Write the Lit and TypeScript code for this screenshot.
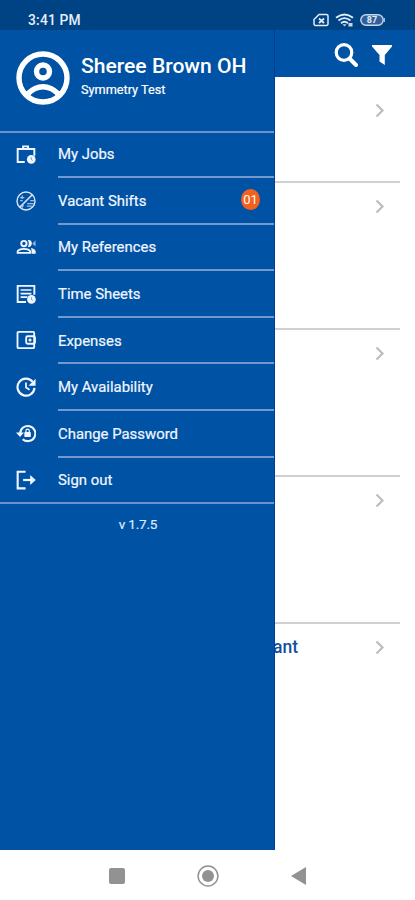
import { LitElement, html, svg, css, TemplateResult } from "lit";
import { customElement, property } from "lit/decorators.js";

// Menu glyphs on a 24-unit grid.
const glyphs: Record<string, TemplateResult> = {
  jobs: svg`<path d="M8.500 6V2.800h6V6M10.500 21.500H2V6h20v8" fill="none" stroke="currentColor" stroke-width="2.300"/>
    <circle cx="18.300" cy="18.500" r="5.200" fill="currentColor"/>
    <path d="M18.300 15.800v2.900l1.800 1" fill="none" stroke="#5f8fca" stroke-width="1"/>`,
  vacant: svg`<g fill="none" stroke="currentColor" stroke-width="1.700" opacity=".9"><circle cx="12" cy="12" r="10.800"/>
    <path d="M4.500 19.500L19.500 4.500" stroke-width="2"/>
    <path d="M5 8h5M5 11.500h3M7.500 5.500v4M13 18h6M13.500 15h7.500M17 11.500h4.500M9 17l-2 3" stroke-width="1.500" opacity=".75"/></g>`,
  references: svg`<g fill="none" stroke="currentColor" stroke-width="2.300"><circle cx="9.500" cy="7.800" r="3.200"/>
    <path d="M2 19v-1.500c0-2 4-3.300 7.500-3.300s7.500 1.300 7.500 3.300V19z"/></g>
    <path d="M14 3.800c3.500-.6 5 1.500 5 4s-2 4.700-5 4c1.800-2 1.800-6 0-8zM18 13.200c3 .5 5.600 2 5.600 4.300v2.700h-4.900v-2.700c0-1.600-.2-2.900-.7-4.300z" fill="currentColor"/>
    <path d="M19.500 8l4-4v7.500z" fill="currentColor" opacity=".6"/>`,
  sheets: svg`<path d="M12 21.500H2V2.200h20V13" fill="none" stroke="currentColor" stroke-width="2.300"/>
    <path d="M5.500 7.200h13M5.500 11.500h13M5.500 15.800h8" fill="none" stroke="currentColor" stroke-width="2"/>
    <circle cx="18.500" cy="18.500" r="5.200" fill="currentColor"/>
    <path d="M18.500 15.800v2.900l1.800 1" fill="none" stroke="#5f8fca" stroke-width="1"/>`,
  expenses: svg`<g fill="none" stroke="currentColor" stroke-width="2.200"><rect x="1.800" y="2.200" width="20" height="19.600" rx="1.200"/>
    <rect x="12.200" y="7.500" width="10.600" height="9" rx="1.800"/></g><circle cx="16.800" cy="12" r="1.900" fill="currentColor"/>`,
  availability: svg`<path d="M20 5.800A10.200 10.200 0 1 0 22.200 13" fill="none" stroke="currentColor" stroke-width="2.600"/>
    <path d="M23.500 2v8.500H15z" fill="currentColor"/><path d="M12 6.500v6l4.300 2.700" fill="none" stroke="currentColor" stroke-width="2.100"/>`,
  password: svg`<path d="M5 12.500A9.100 9.100 0 1 1 8 19.400" fill="none" stroke="currentColor" stroke-width="2.500"/>
    <path d="M0 11.300h9.600L4.800 16.800z" fill="currentColor"/><rect x="10" y="10.800" width="7.800" height="6" rx="1" fill="currentColor"/>
    <path d="M11.900 11V9.200a2 2 0 0 1 4 0V11" fill="none" stroke="currentColor" stroke-width="1.500"/>`,
  signout: svg`<path d="M11.500 2H2v20h9.500" fill="none" stroke="currentColor" stroke-width="2.500"/>
    <path d="M8.500 12h12" stroke="currentColor" stroke-width="2.600"/><path d="M17 6l6.700 6-6.700 6z" fill="currentColor"/>`,
};

@customElement("menu-item")
class MenuItem extends LitElement {
  @property() icon = "";
  @property() label = "";
  @property() badge = "";

  static styles = css`
    :host { display: flex; height: 46.580px; padding-left: 16px; color: #f2f7ff; }
    .icon { width: 20px; height: 20px; margin-top: 12.500px; flex: none; }
    .body {
      flex: 1; margin-left: 22px; display: flex; align-items: center; justify-content: space-between;
      padding-right: 15px; box-sizing: border-box; border-bottom: 2px solid #7499cf;
    }
    :host([last]) .body { border-bottom-color: transparent; }
    .label { font-size: 14.900px; line-height: 20px; -webkit-text-stroke: 0.200px currentColor; margin-top: 1px; }
    .badge {
      width: 19px; height: 21px; border-radius: 50%; background: #f4611d; font-size: 13px;
      line-height: 21px; text-align: center; margin-top: -2px; margin-right: -1px; color: #fff;
    }
  `;

  render() {
    return html`<svg class="icon" viewBox="0 0 24 24">${glyphs[this.icon]}</svg>
      <div class="body"><span class="label">${this.label}</span>
        ${this.badge ? html`<span class="badge">${this.badge}</span>` : null}</div>`;
  }
}

@customElement("app-root")
class AppRoot extends LitElement {
  static styles = css`
    :host {
      display: flex; flex-direction: column; position: relative; width: 415px; height: 900px;
      overflow: hidden; background: #fff; font-family: Roboto, sans-serif; color: #fff;
    }
    .status {
      height: 30px; flex: none; background: #004384; display: flex; align-items: center;
      padding: 9px 30px 0 28px; box-sizing: border-box; gap: 6px;
    }
    .time { font-size: 13.800px; font-weight: 500; flex: 1; line-height: 20px; letter-spacing: 0.200px; color: #e6eefa; }
    .bar {
      height: 47px; flex: none; background: #0052a5; display: flex; align-items: center;
      justify-content: flex-end; gap: 14px; padding: 2px 23px 0 0; box-sizing: border-box;
    }
    .list { flex: 1; display: flex; flex-direction: column; margin: 0 15px 0 273px; }
    .row { height: 147px; box-sizing: border-box; border-bottom: 2px solid #d0d0d2; display: flex; padding: 15px 15px 0 0; justify-content: space-between; }
    .row.first { height: 106px; padding-top: 25px; }
    .row.last { border: none; }
    .title { color: #12509b; font-size: 17.500px; font-weight: 500; line-height: 20px; margin-top: -2px; }
    .chevron { width: 10px; height: 16px; margin-left: auto; }
    .drawer { position: absolute; left: 0; top: 30px; width: 275px; height: 820px; background: #0052a5; box-sizing: border-box; border-right: 1px solid #003e9b; }
    .profile {
      height: 102.500px; box-sizing: border-box; display: flex; border-bottom: 2px solid #6b92cb; padding: 21px 0 0 16px; gap: 11px;
    }
    .avatar { width: 54px; height: 54px; flex: none; }
    .name { font-size: 21.100px; line-height: 26px; font-weight: 500; white-space: nowrap; margin-top: 2px; }
    .org { font-size: 12.700px; line-height: 18px; margin-top: 2px; -webkit-text-stroke: 0.200px currentColor; }
    .menu { border-bottom: 2px solid #6b92cb; height: 372px; box-sizing: border-box; margin-top: -1px; }
    .version { text-align: center; font-size: 13.500px; line-height: 18px; margin-top: 11px; padding-left: 2px; letter-spacing: -0.200px; color: #dceaff; -webkit-text-stroke: 0.200px currentColor; }
    .nav { height: 50px; flex: none; display: flex; align-items: center; justify-content: center; gap: 72px; box-sizing: border-box; padding: 1px 1px 0 0; }
    .battery { font: 700 9px Roboto, sans-serif; }
  `;

  private chevron() {
    return html`<svg class="chevron" viewBox="0 0 10 16"><path d="M1.500 2.500L7.500 8.500L1.500 14.500" fill="none" stroke="#bdbdbd" stroke-width="2.200"/></svg>`;
  }

  render() {
    const items = [
      ["jobs", "My Jobs"], ["vacant", "Vacant Shifts", "01"], ["references", "My References"],
      ["sheets", "Time Sheets"], ["expenses", "Expenses"], ["availability", "My Availability"],
      ["password", "Change Password"], ["signout", "Sign out"],
    ];
    return html`
      <div class="status">
        <span class="time">3:41 PM</span>
        <svg width="16" height="14" viewBox="0 0 16 14"><path d="M6 1.500h7.500a1.500 1.500 0 0 1 1.500 1.500v8a1.500 1.500 0 0 1-1.500 1.500H2.500A1.500 1.500 0 0 1 1 11V6.500z" fill="none" stroke="#e2ebf8" stroke-width="1.500"/><path d="M6 5.500l5 4.500M11 5.500L6 10" stroke="#e2ebf8" stroke-width="1.800"/></svg>
        <svg width="19" height="14" viewBox="0 0 19 14"><g fill="none" stroke="#e2ebf8" stroke-width="1.800"><path d="M1 4.800Q9.500-1.800 18 4.800M3.500 7.500Q9.500 2.800 15.500 7.500M6 10.200Q9.500 7.300 13 10.200"/></g><path d="M7.500 11.200h4L9.500 13.500zM13.500 10h4v3.500h-4z" fill="#c4d5ec"/></svg>
        <svg width="25" height="14" viewBox="0 0 25 14"><rect x=".8" y="1.700" width="22.400" height="10.600" rx="5.300" fill="#315f99" stroke="#c7d7ed" stroke-width="1.400"/><path d="M24.300 5v4" stroke="#c7d7ed" stroke-width="1"/><text class="battery" x="12" y="10.200" text-anchor="middle" fill="#e2ebf8">87</text></svg>
      </div>
      <div class="bar">
        <svg width="24" height="24" viewBox="0 0 24 24"><circle cx="10" cy="9.500" r="7.800" fill="none" stroke="#fff" stroke-width="3.200"/><path d="M15.500 15.500l6.500 6.500" stroke="#fff" stroke-width="4" stroke-linecap="round"/></svg>
        <svg width="20" height="20" viewBox="0 0 20 20"><path d="M0 0h20v1.500L12.800 10v10L7.500 16.500V10L0 1.500z" fill="#fff"/></svg>
      </div>
      <div class="list">
        <div class="row first">${this.chevron()}</div>
        ${[0, 1, 2].map(() => html`<div class="row">${this.chevron()}</div>`)}
        <div class="row last"><span class="title">ant</span>${this.chevron()}</div>
      </div>
      <div class="nav">
        <svg width="16" height="16"><rect width="16" height="16" rx="2" fill="#929292"/></svg>
        <svg width="22" height="22" viewBox="0 0 22 22"><circle cx="11" cy="11" r="9.900" fill="none" stroke="#929292" stroke-width="1.500"/><circle cx="11" cy="11" r="6" fill="#929292"/></svg>
        <svg width="15" height="18" viewBox="0 0 15 18"><path d="M0 9L15 0v18z" fill="#929292"/></svg>
      </div>
      <div class="drawer">
        <div class="profile">
          <svg class="avatar" viewBox="0 0 54 54"><g fill="none" stroke="#fff" stroke-width="5.400"><circle cx="27" cy="27" r="24"/><circle cx="27" cy="20.500" r="6.500"/><path d="M11.500 43Q19 35.800 27 35.800T42.500 43"/></g></svg>
          <div><div class="name">Sheree Brown OH</div><div class="org">Symmetry Test</div></div>
        </div>
        <div class="menu">
          ${items.map((it, i) => html`<menu-item .icon=${it[0]} .label=${it[1]} .badge=${it[2] ?? ""} ?last=${i === items.length - 1}></menu-item>`)}
        </div>
        <div class="version">v 1.7.5</div>
      </div>`;
  }
}
